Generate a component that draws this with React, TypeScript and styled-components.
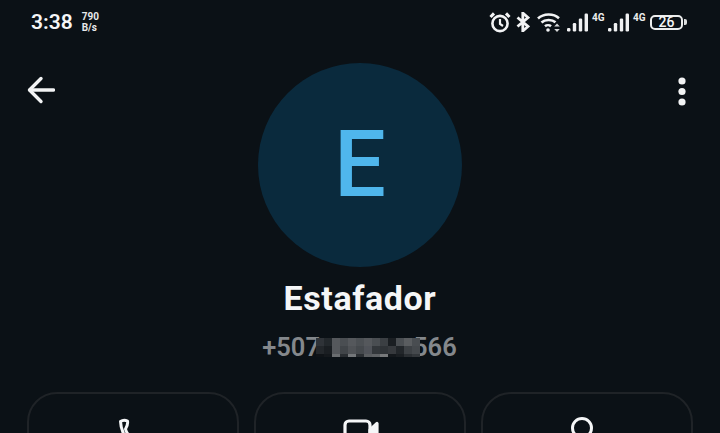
import styled, { createGlobalStyle } from "styled-components";

const GlobalStyle = createGlobalStyle`
  html, body {
    margin: 0;
    height: 100%;
    overflow: hidden;
    background-color: #0b1116;
  }
`;

const Page = styled.div`
  width: 720px;
  height: 433px;
  overflow: hidden;
  background-color: #0b1116;
  font-family: Roboto, "Liberation Sans", sans-serif;
  color: #f5f6f7;
`;

const StatusBar = styled.div`
  display: flex;
  align-items: center;
  justify-content: space-between;
  height: 44px;
  padding: 0 33px 0 31px;
`;

const StatusLeft = styled.div`
  display: flex;
  align-items: center;
  gap: 9px;
`;

const Time = styled.span`
  font-size: 21px;
  font-weight: 600;
`;

const Speed = styled.span`
  font-size: 10px;
  font-weight: 700;
  line-height: 11px;
  color: #e8e9ea;
`;

const StatusIcons = styled.div`
  display: flex;
  align-items: center;
`;

const NetworkLabel = styled.span<{ $after: number }>`
  align-self: flex-start;
  width: 12px;
  margin: 2px ${(p) => p.$after}px 0 4px;
  font-size: 10px;
  font-weight: 700;
  line-height: 9px;
  color: #eceded;
  white-space: nowrap;
`;

const Battery = styled.div`
  box-sizing: border-box;
  display: flex;
  align-items: center;
  justify-content: center;
  width: 33px;
  height: 15px;
  border: 2px solid #eceded;
  border-radius: 5px;
  font-size: 14px;
  font-weight: 500;
  line-height: 11px;
  color: #f5f6f7;
`;

const BatteryTip = styled.div`
  width: 3px;
  height: 6px;
  margin-left: 1px;
  border-radius: 0 2px 2px 0;
  background-color: #dcdddd;
`;

const Hero = styled.div`
  display: grid;
  grid-template-columns: 1fr 204px 1fr;
  margin-top: 19px;
`;

const IconButton = styled.button<{ $side: "start" | "end" }>`
  display: flex;
  align-self: start;
  justify-self: ${(p) => p.$side};
  margin: ${(p) => (p.$side === "start" ? "13px 0 0 27px" : "14px 34px 0 0")};
  padding: 0;
  border: 0;
  background: none;
  color: #f2f3f4;
`;

const Avatar = styled.div`
  display: flex;
  align-items: center;
  justify-content: center;
  width: 204px;
  height: 204px;
  border-radius: 50%;
  background-color: #0a2a3d;
  color: #4fb6ec;
  font-size: 92px;
  font-weight: 500;
  line-height: 1;
`;

const Name = styled.h1`
  margin: 11px 0 0;
  font-size: 34px;
  font-weight: 700;
  line-height: 40px;
  letter-spacing: 0.6px;
  text-align: center;
`;

const Phone = styled.div`
  display: flex;
  align-items: center;
  justify-content: center;
  height: 30px;
  margin: 14px 0 0 -1px;
  font-size: 25.5px;
  font-weight: 600;
  color: #84888c;
`;

const Mosaic = styled.div`
  position: relative;
  display: grid;
  grid-template-columns: repeat(13, 8px);
  grid-template-rows: 8px 8px 3px;
  margin: 0 -7px 0 -4px;
  background-color: #0b1116;
`;

const MosaicCell = styled.span<{ $color: string }>`
  background-color: ${(p) => p.$color};
`;

const Actions = styled.div`
  display: grid;
  grid-template-columns: repeat(3, 212px);
  gap: 15px;
  margin-top: 30px;
  padding: 0 27px;
`;

const Action = styled.button<{ $shift: number }>`
  display: flex;
  justify-content: center;
  height: 90px;
  padding: 23px ${(p) => (p.$shift < 0 ? -p.$shift * 2 : 0)}px 0 ${(p) => (p.$shift > 0 ? p.$shift * 2 : 0)}px;
  border: 2px solid #1f2327;
  border-radius: 30px;
  background: none;
  color: #f5f6f7;
`;

const mosaicColors = [
  "#2f3338", "#23282c", "#55585c", "#4a4e52", "#55585c", "#4c5054", "#55585c", "#4a4e52", "#3b3f43", "#1a1e22", "#4a4e52", "#5a5d60", "#494d51",
  "#23272b", "#1a1e22", "#55585c", "#414549", "#4f5256", "#45494d", "#505359", "#33373b", "#2f3337", "#36393d", "#22262a", "#3d4145", "#45494d",
  "#0f1317", "#14181c", "#6a6d70", "#2a2e32", "#74777a", "#2a2e32", "#5a5d60", "#5f6265", "#77797b", "#14181c", "#1a1e22", "#2a2e32", "#33373b",
];

const AlarmIcon = () => (
  <svg width="22" height="22" viewBox="0 0 22 22" fill="none" stroke="#f2f3f4" strokeWidth="2.6">
    <circle cx="11" cy="12.5" r="7.6" />
    <path d="M11 8v5l3 2" strokeWidth="2.2" />
    <path d="M1.5 6 5 2.4M20.5 6 17 2.4" strokeWidth="3" />
  </svg>
);

const BluetoothIcon = () => (
  <svg width="14" height="20" viewBox="0 0 14 20" fill="none" stroke="#f2f3f4" strokeWidth="2.8" style={{ marginLeft: 5 }}>
    <path d="M1.5 5.5 12 14.5 6.8 19V1L12 5.5 1.5 14.5" />
  </svg>
);

const WifiIcon = () => (
  <svg width="24" height="20" viewBox="0 0 24 20" fill="none" stroke="#f2f3f4" strokeWidth="2.6" style={{ marginLeft: 7 }}>
    <path d="M1 6.5C6.5 1.2 16.5 1.2 22 6.2" />
    <path d="M4.5 10.5C8 7.2 15 7.2 18.5 10.2" />
    <path d="M8 14.3c1.6-1.4 4.4-1.4 6 0" />
    <circle cx="11" cy="18" r="1.8" fill="#f2f3f4" stroke="none" />
    <path d="M20 11.5l2.8 3h-5.6zM20 20l-2.8-3h5.6z" fill="#d8d9da" stroke="none" />
  </svg>
);

const SignalIcon = ({ gap = 0 }: { gap?: number }) => (
  <svg width="21" height="19" viewBox="0 0 21 19" fill="#f0f1f2" style={{ marginLeft: gap }}>
    <rect x="0" y="15" width="3.4" height="3.5" rx="1.2" />
    <rect x="5.8" y="10" width="3.4" height="8.5" rx="1.2" />
    <rect x="11.8" y="5.5" width="3.4" height="13" rx="1.2" />
    <rect x="17.6" y="0.5" width="3.4" height="18" rx="1.2" />
  </svg>
);

const BackIcon = () => (
  <svg width="28" height="28" viewBox="0 0 28 28" fill="none" stroke="currentColor" strokeWidth="3.4" strokeLinecap="round" strokeLinejoin="round">
    <path d="M26.5 14H3" />
    <path d="M14 2.5 2.5 14 14 25.5" />
  </svg>
);

const MoreIcon = () => (
  <svg width="8" height="29" viewBox="0 0 8 29" fill="currentColor">
    <circle cx="4" cy="4" r="3.6" />
    <circle cx="4" cy="14.5" r="3.6" />
    <circle cx="4" cy="25" r="3.6" />
  </svg>
);

const CallIcon = () => (
  <svg width="32" height="40" viewBox="0 0 32 40" fill="none" stroke="currentColor" strokeWidth="3" strokeLinejoin="round">
    <path d="M3.5 4.5C5.5 3 8.5 3 10.5 4 11 7 10.5 9 8.5 12 9.5 16 13 21 21 26 23 24 25 23.5 29 25 30 28 29 30 27 32 15 32 4 18 3.5 4.5Z" />
  </svg>
);

const CameraIcon = () => (
  <svg width="36" height="30" viewBox="0 0 36 30" fill="none" stroke="currentColor" strokeWidth="3.2" strokeLinejoin="round">
    <rect x="2" y="4" width="25" height="24" rx="4" />
    <path d="M27 13 34 6.5V24L27 18Z" fill="currentColor" />
  </svg>
);

const PersonIcon = () => (
  <svg width="40" height="40" viewBox="0 0 40 40" fill="none" stroke="currentColor" strokeWidth="3">
    <circle cx="20" cy="11" r="9.5" />
    <path d="M4 38c1-8 8-12 16-12s15 4 16 12" />
  </svg>
);

const App = () => (
  <Page>
    <GlobalStyle />
    <StatusBar>
      <StatusLeft>
        <Time>3:38</Time>
        <Speed>
          790
          <br />
          B/s
        </Speed>
      </StatusLeft>
      <StatusIcons>
        <AlarmIcon />
        <BluetoothIcon />
        <WifiIcon />
        <SignalIcon gap={6} />
        <NetworkLabel $after={4}>4G</NetworkLabel>
        <SignalIcon />
        <NetworkLabel $after={5}>4G</NetworkLabel>
        <Battery>26</Battery>
        <BatteryTip />
      </StatusIcons>
    </StatusBar>
    <Hero>
      <IconButton $side="start">
        <BackIcon />
      </IconButton>
      <Avatar>E</Avatar>
      <IconButton $side="end">
        <MoreIcon />
      </IconButton>
    </Hero>
    <Name>Estafador</Name>
    <Phone>
      <span>+507</span>
      <Mosaic>
        {mosaicColors.map((color, i) => (
          <MosaicCell key={i} $color={color} />
        ))}
      </Mosaic>
      <span>566</span>
    </Phone>
    <Actions>
      <Action $shift={-0.5}>
        <CallIcon />
      </Action>
      <Action $shift={1}>
        <CameraIcon />
      </Action>
      <Action $shift={-5}>
        <PersonIcon />
      </Action>
    </Actions>
  </Page>
);

export default App;
